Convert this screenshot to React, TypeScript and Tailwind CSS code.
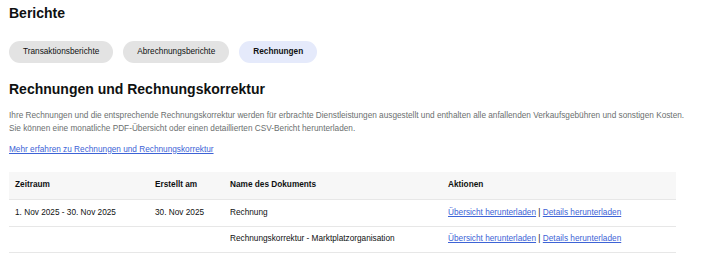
import React from "react";

const tabs = [
    { label: "Transaktionsberichte", active: false },
    { label: "Abrechnungsberichte", active: false },
    { label: "Rechnungen", active: true },
];

const rows = [
    { period: "1. Nov 2025 - 30. Nov 2025", created: "30. Nov 2025", name: "Rechnung" },
    { period: "", created: "", name: "Rechnungskorrektur - Marktplatzorganisation" },
];

const cols = "grid grid-cols-[140px_75px_218px_1fr]";

export default function App() {
    return (
        <div className="w-[723px] h-[256px] overflow-hidden bg-white pl-[9px] pt-[4px] font-['Liberation_Sans',Arial,sans-serif] text-[#0f1111]">
            <h1 className="text-[14px] leading-[18px] font-bold">Berichte</h1>

            {/* Tabs */}
            <div className="flex gap-[10px] mt-[19px]">
                {tabs.map((t) => (
                    <button
                        key={t.label}
                        className={
                            "h-[22px] px-[14px] rounded-full text-[8.25px] leading-[22px] " +
                            (t.active ? "bg-[#e5eafb] font-bold" : "bg-[#e3e3e3]")
                        }
                    >
                        {t.label}
                    </button>
                ))}
            </div>

            <h2 className="mt-[17px] text-[14px] leading-[18px] font-bold">Rechnungen und Rechnungskorrektur</h2>
            <p className="mt-[10.5px] text-[8.25px] leading-[13px] text-[#6b6f6f]">
                Ihre Rechnungen und die entsprechende Rechnungskorrektur werden für erbrachte Dienstleistungen ausgestellt und enthalten alle anfallenden Verkaufsgebühren und sonstigen Kosten.
                <br />
                Sie können eine monatliche PDF-Übersicht oder einen detaillierten CSV-Bericht herunterladen.
            </p>
            <a href="#" className="block mt-[8px] text-[8.25px] leading-[13px] text-[#3d63d6] underline">
                Mehr erfahren zu Rechnungen und Rechnungskorrektur
            </a>

            {/* Table */}
            <div className="mt-[16.5px] w-[667px] text-[8.25px]">
                <div className={cols + " h-[28px] items-center bg-[#f7f7f7] border-b border-[#e7e7e7] font-bold"}>
                    <div className="pl-[6px]">Zeitraum</div>
                    <div className="pl-[6px]">Erstellt am</div>
                    <div className="pl-[6px]">Name des Dokuments</div>
                    <div className="pl-[6px]">Aktionen</div>
                </div>
                {rows.map((r, i) => (
                    <div key={i} className={cols + " h-[26.5px] items-center border-b border-[#e7e7e7]"}>
                        <div className="pl-[6px]">{r.period}</div>
                        <div className="pl-[6px]">{r.created}</div>
                        <div className="pl-[6px]">{r.name}</div>
                        <div className="pl-[6px]">
                            <a href="#" className="text-[#3d63d6] underline">Übersicht herunterladen</a>
                            <span> | </span>
                            <a href="#" className="text-[#3d63d6] underline">Details herunterladen</a>
                        </div>
                    </div>
                ))}
            </div>
        </div>
    );
}
